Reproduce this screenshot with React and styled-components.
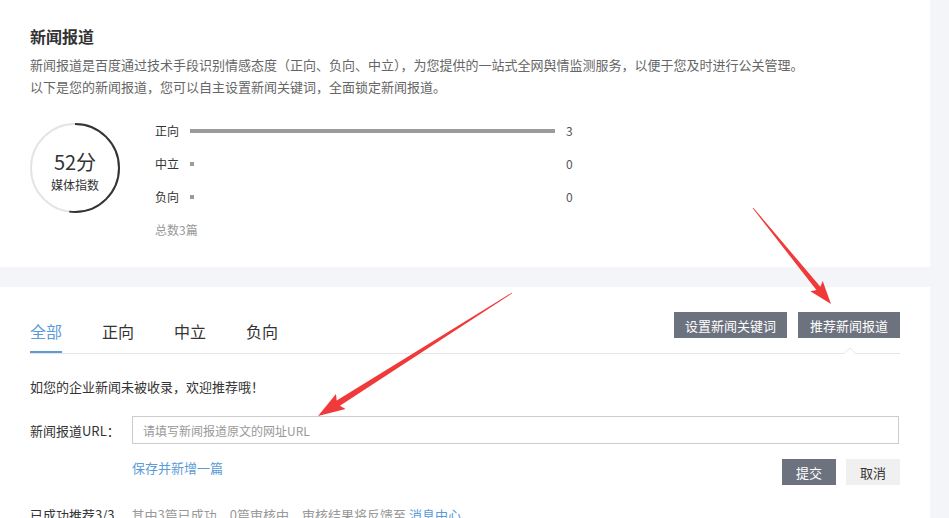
import styled, { createGlobalStyle } from 'styled-components'

const GlobalStyle = createGlobalStyle`
  html, body {
    margin: 0;
    padding: 0;
    background: #f4f5f9;
  }
  body {
    font-family: "Noto Sans CJK SC", "Noto Sans", sans-serif;
    color: #333;
  }
  * { box-sizing: border-box; }
`

const Page = styled.div`
  position: relative;
  width: 949px;
  height: 518px;
  overflow: hidden;
`

const Card = styled.div`
  width: 930px;
  background: #fff;
  padding: 0 30px;
`

const TopCard = styled(Card)`
  height: 267px;
  padding-top: 26px;
  margin-bottom: 20px;
`

const Title = styled.h2`
  margin: 0;
  font-size: 16px;
  line-height: 20px;
  font-weight: bold;
  color: #333;
`

const Desc = styled.p`
  margin: 8px 0 0;
  font-size: 13px;
  line-height: 22px;
  color: #666;
`

const Stats = styled.div`
  display: flex;
  align-items: flex-start;
  margin-top: 16px;
`

const Score = styled.div`
  position: relative;
  width: 90px;
  height: 90px;
  margin-top: 9px;
  margin-right: 35px;
  display: flex;
  flex-direction: column;
  align-items: center;
  padding-top: 27px;
`

const Ring = styled.svg`
  position: absolute;
  left: 0;
  top: 0;
`

const ScoreValue = styled.div`
  font-size: 20px;
  line-height: 24px;
  color: #333;
`

const ScoreLabel = styled.div`
  margin-top: 3px;
  font-size: 12px;
  line-height: 16px;
  color: #333;
`

const Bars = styled.div`
  display: flex;
  flex-direction: column;
`

const BarRow = styled.div`
  display: flex;
  align-items: center;
  height: 33px;
  font-size: 12px;
  color: #333;
`

const BarLabel = styled.span`
  width: 35px;
`

const Track = styled.div`
  width: 365px;
  height: 4px;
`

const Fill = styled.div`
  height: 4px;
  background: #9b9b9b;
`

const BarValue = styled.span`
  margin-left: 11px;
  color: #555;
`

const Total = styled.div`
  height: 33px;
  line-height: 33px;
  font-size: 12px;
  color: #999;
`

const BottomCard = styled(Card)`
  height: 231px;
`

const Header = styled.div`
  position: relative;
  display: flex;
  justify-content: space-between;
  align-items: flex-start;
  border-bottom: 1px solid #e6e6e6;
`

const Tabs = styled.div`
  display: flex;
  gap: 40px;
  margin-top: 33px;
`

const Tab = styled.div`
  font-size: 16px;
  line-height: 22px;
  padding-bottom: 9px;
  border-bottom: 2px solid ${p => (p.$active ? '#5b9bd8' : 'transparent')};
  color: ${p => (p.$active ? '#5b9bd8' : '#333')};
`

const Actions = styled.div`
  display: flex;
  gap: 11px;
  margin-top: 25px;
`

const Button = styled.button`
  height: 26px;
  padding: 0 ${p => p.$pad || 11}px;
  border: none;
  font-family: inherit;
  font-size: 13px;
  background: ${p => (p.$light ? '#f0f0f0' : '#6c727e')};
  color: ${p => (p.$light ? '#333' : '#fff')};
`

const Caret = styled.div`
  position: absolute;
  right: 45px;
  bottom: -1px;
  width: 10px;
  height: 10px;
  background: #fff;
  border-left: 1px solid #e6e6e6;
  border-top: 1px solid #e6e6e6;
  transform: translateY(5px) rotate(45deg);
  clip-path: polygon(0 0, 100% 0, 0 100%);
`

const Intro = styled.div`
  margin-top: 23px;
  font-size: 13px;
  line-height: 20px;
`

const Field = styled.div`
  display: flex;
  align-items: center;
  margin-top: 19px;
`

const FieldLabel = styled.label`
  width: 102px;
  font-size: 13px;
`

const Input = styled.input`
  flex: 1;
  height: 28px;
  margin-right: 1px;
  padding: 0 10px;
  border: 1px solid #cccccc;
  font-family: inherit;
  font-size: 12px;
  outline: none;
  &::placeholder { color: #999; }
`

const FormFooter = styled.div`
  display: flex;
  justify-content: space-between;
  align-items: flex-start;
  margin: 15px 0 0 102px;
`

const Link = styled.a`
  font-size: 13px;
  line-height: 20px;
  color: #5b9bd8;
  text-decoration: none;
  margin-top: -1px;
`

const ButtonGroup = styled.div`
  display: flex;
  gap: 10px;
`

const Summary = styled.div`
  margin-top: 20px;
  font-size: 13px;
  line-height: 20px;
  white-space: nowrap;
`

const Muted = styled.span`
  color: #999;
  margin-left: 17px;
`

const Marks = styled.svg`
  position: absolute;
  left: 0;
  top: 0;
  pointer-events: none;
`

const stats = [
  { label: '正向', value: 3 },
  { label: '中立', value: 0 },
  { label: '负向', value: 0 },
]

// tapered annotation arrow from tail to tip
const arrowPoints = ([tx, ty], [px, py], headLen, headW, neck) => {
  const dx = px - tx
  const dy = py - ty
  const len = Math.hypot(dx, dy)
  const ux = dx / len
  const uy = dy / len
  const nx = -uy
  const ny = ux
  const bx = px - ux * headLen
  const by = py - uy * headLen
  const pts = [
    [tx + nx * 0.4, ty + ny * 0.4],
    [bx + nx * neck, by + ny * neck],
    [bx - ux * 3 + nx * headW, by - uy * 3 + ny * headW],
    [px, py],
    [bx - ux * 3 - nx * headW, by - uy * 3 - ny * headW],
    [bx - nx * neck, by - ny * neck],
    [tx - nx * 0.4, ty - ny * 0.4],
  ]
  return pts.map(p => p.map(v => v.toFixed(1)).join(',')).join(' ')
}

const ScoreRing = ({ percent }) => {
  const r = 44
  const c = 2 * Math.PI * r
  return (
    <Ring width="90" height="90" viewBox="0 0 90 90">
      <circle cx="45" cy="45" r={r} fill="none" stroke="#e4e4e4" strokeWidth="2" />
      <circle
        cx="45"
        cy="45"
        r={r}
        fill="none"
        stroke="#333"
        strokeWidth="2"
        strokeDasharray={`${(c * percent) / 100} ${c}`}
        transform="rotate(-90 45 45)"
      />
    </Ring>
  )
}

const App = () => {
  const max = Math.max(...stats.map(s => s.value))
  return (
    <Page>
      <GlobalStyle />
      <TopCard>
        <Title>新闻报道</Title>
        <Desc>
          新闻报道是百度通过技术手段识别情感态度（正向、负向、中立），为您提供的一站式全网舆情监测服务，以便于您及时进行公关管理。
          <br />
          以下是您的新闻报道，您可以自主设置新闻关键词，全面锁定新闻报道。
        </Desc>
        <Stats>
          <Score>
            <ScoreRing percent={52} />
            <ScoreValue>52分</ScoreValue>
            <ScoreLabel>媒体指数</ScoreLabel>
          </Score>
          <Bars>
            {stats.map(s => (
              <BarRow key={s.label}>
                <BarLabel>{s.label}</BarLabel>
                <Track>
                  <Fill style={{ width: Math.max(4, (s.value / max) * 365) }} />
                </Track>
                <BarValue>{s.value}</BarValue>
              </BarRow>
            ))}
            <Total>总数3篇</Total>
          </Bars>
        </Stats>
      </TopCard>

      <BottomCard>
        <Header>
          <Tabs>
            <Tab $active>全部</Tab>
            <Tab>正向</Tab>
            <Tab>中立</Tab>
            <Tab>负向</Tab>
          </Tabs>
          <Actions>
            <Button>设置新闻关键词</Button>
            <Button $pad={12}>推荐新闻报道</Button>
          </Actions>
          <Caret />
        </Header>
        <Intro>如您的企业新闻未被收录，欢迎推荐哦！</Intro>
        <Field>
          <FieldLabel>新闻报道URL：</FieldLabel>
          <Input placeholder="请填写新闻报道原文的网址URL" />
        </Field>
        <FormFooter>
          <Link href="#">保存并新增一篇</Link>
          <ButtonGroup>
            <Button $pad={14}>提交</Button>
            <Button $pad={14} $light>取消</Button>
          </ButtonGroup>
        </FormFooter>
        <Summary>
          已成功推荐3/3
          <Muted>其中3篇已成功，0篇审核中，审核结果将反馈至</Muted>
          <Link href="#"> 消息中心</Link>
        </Summary>
      </BottomCard>

      <Marks width="949" height="518">
        <polygon points={arrowPoints([753, 208], [831, 304], 20, 8, 2.6)} fill="#f03a3a" />
        <polygon points={arrowPoints([512, 293], [318, 416], 24, 9, 3)} fill="#f03a3a" />
      </Marks>
    </Page>
  )
}

export default App
